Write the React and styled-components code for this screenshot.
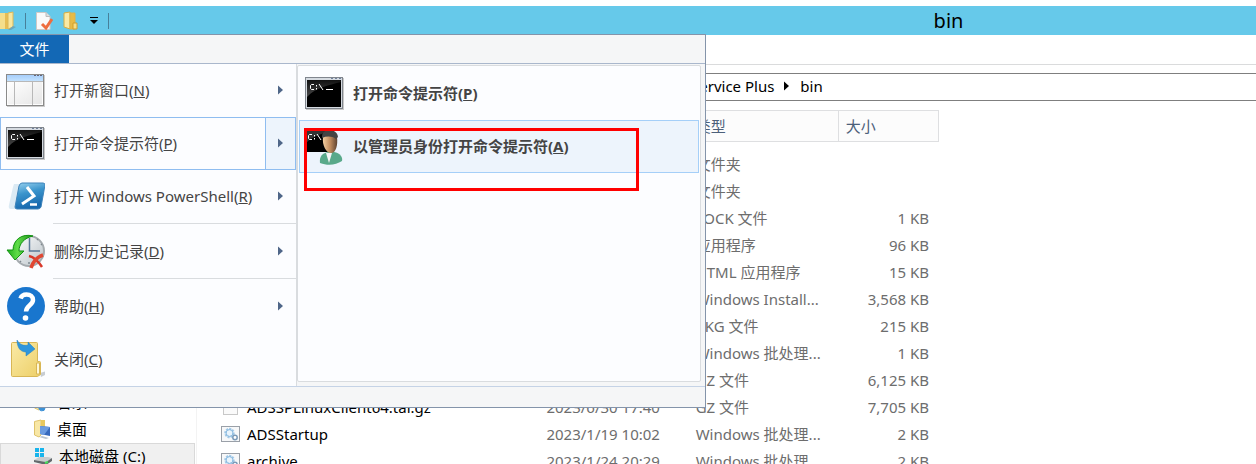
import React from 'react';
import styled, { createGlobalStyle } from 'styled-components';

const menuItems = [
  { icon: 'window', label: '打开新窗口', accessKey: 'N', arrow: true },
  { icon: 'cmd', label: '打开命令提示符', accessKey: 'P', arrow: true, active: true },
  { icon: 'powershell', label: '打开 Windows PowerShell', accessKey: 'R', arrow: true },
  { icon: 'history', label: '删除历史记录', accessKey: 'D', arrow: true, divided: true },
  { icon: 'help', label: '帮助', accessKey: 'H', arrow: true, divided: true },
  { icon: 'close', label: '关闭', accessKey: 'C' },
];

const subItems = [
  { icon: 'cmd', label: '打开命令提示符', accessKey: 'P' },
  { icon: 'admin', label: '以管理员身份打开命令提示符', accessKey: 'A', active: true },
];

const files = [
  { type: '文件夹' },
  { type: '文件夹' },
  { type: 'LOCK 文件', size: '1 KB' },
  { type: '应用程序', size: '96 KB' },
  { type: 'HTML 应用程序', size: '15 KB' },
  { type: 'Windows Install...', size: '3,568 KB' },
  { type: 'PKG 文件', size: '215 KB' },
  { type: 'Windows 批处理...', size: '1 KB' },
  { type: 'GZ 文件', size: '6,125 KB' },
  { icon: 'file', name: 'ADSSPLinuxClient64.tar.gz', date: '2023/6/30 17:40', type: 'GZ 文件', size: '7,705 KB' },
  { icon: 'batch', name: 'ADSStartup', date: '2023/1/19 10:02', type: 'Windows 批处理...', size: '2 KB' },
  { icon: 'batch', name: 'archive', date: '2023/1/24 20:29', type: 'Windows 批处理...', size: '2 KB' },
];

const places = [
  { icon: 'music', label: '音乐' },
  { icon: 'desktop', label: '桌面' },
  { icon: 'disk', label: '本地磁盘 (C:)', selected: true },
];

function WindowIcon() {
  return (
    <svg width="40" height="40" viewBox="0 0 40 40">
      <defs>
        <linearGradient id="winBar" x2="0" y2="1">
          <stop offset="0" stopColor="#a6cdfa" />
          <stop offset="1" stopColor="#c3e2ff" />
        </linearGradient>
        <linearGradient id="winPane" x2="1" y2="1">
          <stop offset="0" stopColor="#fff" />
          <stop offset="1" stopColor="#e6e6e6" />
        </linearGradient>
      </defs>
      <rect x="2" y="5" width="38" height="32" fill="#ccc" />
      <rect x="1.500" y="4.500" width="37" height="31" fill="#fdfdfd" stroke="#8a8a8a" />
      <rect x="2" y="5" width="36" height="6" fill="url(#winBar)" />
      <rect x="3" y="12" width="34" height="22" fill="url(#winPane)" />
      <path d="M9.500 12v23M27.500 12v23M2 11.500h36" stroke="#b8b8b8" />
      <path d="M29 5.500h2M32 5.500h2M35 5.500h2" stroke="#667" />
    </svg>
  );
}

function CmdIcon() {
  return (
    <svg width="40" height="40" viewBox="0 0 40 40">
      <defs>
        <linearGradient id="cmdGloss" x2="0" y2="1">
          <stop offset="0" stopColor="#111" />
          <stop offset="1" stopColor="#4a4a4a" />
        </linearGradient>
      </defs>
      <rect x="2" y="5" width="38" height="32" fill="#c9c9c9" />
      <rect x="1.500" y="4.500" width="37" height="31" fill="#d5dae0" stroke="#80868e" />
      <rect x="3" y="7" width="34" height="27" fill="#000" />
      <path d="M3 7h34v2C26 12 12 14 3 24z" fill="url(#cmdGloss)" />
      <path d="M27 5.500h2M31 5.500h2M35 5.500h2" stroke="#71809a" />
      <path
        d="M10 11.500H7.500L6.500 12.500v3l1 1H10M12.500 12v1.500M12.500 15v1.500M15 11l4 6M22 16.500h7"
        fill="none"
        stroke="#fff"
      />
    </svg>
  );
}

function PowerShellIcon() {
  return (
    <svg width="40" height="40" viewBox="0 0 40 40">
      <defs>
        <linearGradient id="ps" x2="0.300" y2="1">
          <stop offset="0" stopColor="#9bd3f0" />
          <stop offset="0.450" stopColor="#3a94cc" />
          <stop offset="1" stopColor="#1769ae" />
        </linearGradient>
      </defs>
      <path d="M9 8h6l-5 25H6q-3 0-2-4l4-18z" fill="#c5deed" opacity="0.600" />
      <path d="M17 7h21q2 0 2 2l-4 22q-1 2-3 2H12q-2 0-2-2l4-21q1-3 3-3z" fill="url(#ps)" stroke="#3d83ba" />
      <path d="M22 11l7 9-12 8" fill="none" stroke="#fff" strokeWidth="3" />
      <path d="M25 28.500h7" stroke="#fff" strokeWidth="2.500" />
    </svg>
  );
}

function HistoryIcon() {
  return (
    <svg width="40" height="40" viewBox="0 0 40 40">
      <defs>
        <linearGradient id="clock" x2="1" y2="1">
          <stop offset="0" stopColor="#fff" />
          <stop offset="1" stopColor="#b9c2c8" />
        </linearGradient>
        <linearGradient id="green" x2="1" y2="0">
          <stop offset="0" stopColor="#1fae1c" />
          <stop offset="0.400" stopColor="#5fdc48" />
          <stop offset="1" stopColor="#1b8f1a" />
        </linearGradient>
      </defs>
      <circle cx="24" cy="20" r="15" fill="url(#clock)" stroke="#a5abaf" strokeWidth="2" />
      <path d="M24.500 7v13H35" fill="none" stroke="#5a7897" strokeWidth="1.500" />
      <path d="M32 9l1-1M36 14l1-1M24 31v2M16 30l-1 1M13 25l-1 1" stroke="#7f8990" strokeWidth="1.500" />
      <path d="M28 5C17 2 8 9 8 19H2l8 10 9-9h-5c0-7 5-13 14-15z" fill="url(#green)" stroke="#139313" />
      <path d="M24 25c5 1 9 5 13 11" fill="none" stroke="#d8382a" strokeWidth="2.500" />
      <path d="M38 24c-6 2-10 6-12 13" fill="none" stroke="#e04732" strokeWidth="3.500" />
    </svg>
  );
}

function HelpIcon() {
  return (
    <svg width="40" height="40" viewBox="0 0 40 40">
      <circle cx="21" cy="20" r="19" fill="#1976ce" />
      <path d="M15.500 12.500c1-3 3-4 6-4 4 0 6.500 2 6.500 5.500 0 5-7 5.500-7 11.500" fill="none" stroke="#fff" strokeWidth="4.500" />
      <circle cx="20.500" cy="32" r="2.800" fill="#fff" />
    </svg>
  );
}

function CloseIcon() {
  return (
    <svg width="40" height="40" viewBox="0 0 40 40">
      <defs>
        <linearGradient id="folder" x2="1" y2="1">
          <stop offset="0" stopColor="#faeaa6" />
          <stop offset="1" stopColor="#edcf68" />
        </linearGradient>
      </defs>
      <path d="M35 34l7-2v3l-6 3z" fill="#c8cdd2" />
      <path d="M6.500 4.500q0-1 1-1h24q1 0 1 1v18h2q1 0 1 1v12l-3 2h-25q-1 0-1-1z" fill="url(#folder)" stroke="#d8b655" />
      <path d="M31.500 35V24h3v11z" fill="#fff8d8" stroke="#d8b655" />
      <path d="M12 1c3 5 7 6 11 5V3l7 7-9 7v-4c-6 0-9-5-9-12z" fill="#2e96dc" stroke="#2380c0" strokeWidth="0.500" />
    </svg>
  );
}

function AdminIcon() {
  return (
    <svg width="40" height="40" viewBox="0 0 40 40">
      <defs>
        <linearGradient id="face" x2="1" y2="0">
          <stop offset="0" stopColor="#f3cfa2" />
          <stop offset="0.500" stopColor="#c18c5e" />
          <stop offset="1" stopColor="#5d4230" />
        </linearGradient>
      </defs>
      <rect x="2" y="2" width="28" height="24" fill="#000" />
      <path d="M2 2h28v3C20 7 10 9 2 17z" fill="#333" />
      <path d="M8 8.500H5.500l-1 1v3l1 1H8M10.500 9v1.500M10.500 12v1.500M13 8l4 6" fill="none" stroke="#fff" />
      <path d="M16 37c-1-7 3-10 8-11h6c6 1 9 5 8 9-6 4-14 5-22 2z" fill="#59a98a" />
      <path d="M22 27l3 10 3-10z" fill="#f5f5f5" />
      <path d="M19 11c0-4 14-4 14 0 1 8-1 16-6 16s-9-8-8-16z" fill="url(#face)" />
      <path d="M18 10c1-8 15-8 16 1l-2 2c-4-3-9-3-14-1z" fill="#444" />
    </svg>
  );
}

function FolderIcon() {
  return (
    <svg width="18" height="20" viewBox="0 0 18 20">
      <path d="M2 2l6-1v17l-6-2z" fill="#f9e9a4" stroke="#d6ad43" />
      <path d="M8 2h5v16H8z" fill="#e7bb45" stroke="#ddb34a" />
      <path d="M11 12h4v6h-4z" fill="#f7dd83" stroke="#cf9d2c" />
    </svg>
  );
}

function OpenFolderIcon() {
  return (
    <svg width="16" height="20" viewBox="0 0 16 20">
      <path d="M0 2h5v16H0z" fill="#f4de8c" />
      <path d="M5 2h3v16H5z" fill="#e6bd55" />
      <path d="M8 2l5-1v15l-5 2z" fill="#f8e7a0" stroke="#dcb858" />
      <path d="M13 15l3 1-5 3H8z" fill="#6aa8bd" />
    </svg>
  );
}

function PropertiesIcon() {
  return (
    <svg width="18" height="20" viewBox="0 0 18 20">
      <path d="M1.500 1.500H11l4 4v13H1.500z" fill="#fafafa" stroke="#cfc9c6" />
      <path d="M11 1.500v4h4" fill="#ddd" stroke="#bbb" />
      <path d="M7 13l4 4 6-9" fill="none" stroke="#ee6d3f" strokeWidth="3" />
    </svg>
  );
}

function DesktopIcon() {
  return (
    <svg width="18" height="20" viewBox="0 0 18 20">
      <path d="M1.500 2.500L8 1v15l-2 2-4.500-2z" fill="#f8e7a5" stroke="#dfc36c" />
      <path d="M8 1h4v7H8z" fill="#e8c85f" />
      <path d="M7 7l10 1v9L7 15z" fill="#3569bd" />
      <path d="M7 7l10 1-6 8-4-1z" fill="#6a9be0" />
      <path d="M6 18l3-1 7 2-3 1z" fill="#b9c4cf" />
    </svg>
  );
}

function DiskIcon() {
  return (
    <svg width="20" height="20" viewBox="0 0 20 20">
      <path d="M2 2h4v4H2zM7 2h4v4H7zM2 7h4v4H2zM7 7h4v4H7z" fill="#18b4ec" />
      <path d="M1 14l5-3h9l4 1-6 4z" fill="#c8cdcf" />
      <path d="M1 14l12 2 6-4v3l-6 4-12-3z" fill="#64696c" />
      <path d="M12 17l3-1" stroke="#45e05a" strokeWidth="2" />
    </svg>
  );
}

function MusicIcon() {
  return (
    <svg width="18" height="20" viewBox="0 0 18 20">
      <path d="M1.500 2.500L8 1v15l-2 2-4.500-2z" fill="#f8e7a5" stroke="#dfc36c" />
      <path d="M10 3v10a3 3 0 1 0 2 3V7l3 2" fill="#3c91d6" stroke="#3c91d6" />
    </svg>
  );
}

function BatchIcon() {
  return (
    <svg width="20" height="18" viewBox="0 0 20 18">
      <rect x="0.500" y="1.500" width="18" height="15" fill="#f7f8f9" stroke="#9aa0a8" />
      <circle cx="8.500" cy="8" r="4" fill="#e9f4fc" stroke="#a3cae8" strokeWidth="2.500" strokeDasharray="2 1" />
      <circle cx="8.500" cy="8" r="3.500" fill="none" stroke="#8dbbe0" />
      <circle cx="14" cy="12.500" r="2.200" fill="#fff" stroke="#7c9bb9" strokeWidth="1.500" />
    </svg>
  );
}

function FileIcon() {
  return (
    <svg width="20" height="18" viewBox="0 0 20 18">
      <rect x="2.500" y="0.500" width="14" height="16" fill="#fafafa" stroke="#c8c8c8" />
    </svg>
  );
}

const icons = {
  window: WindowIcon,
  cmd: CmdIcon,
  powershell: PowerShellIcon,
  history: HistoryIcon,
  help: HelpIcon,
  close: CloseIcon,
  admin: AdminIcon,
  desktop: DesktopIcon,
  disk: DiskIcon,
  music: MusicIcon,
  batch: BatchIcon,
  file: FileIcon,
};

function Icon({ name }) {
  const Drawing = icons[name];
  return Drawing ? <Drawing /> : null;
}

function Arrow({ color }) {
  return (
    <svg width="6" height="10" viewBox="0 0 6 10">
      <path d="M0 0.500l5 4.500-5 4.500z" fill={color} />
    </svg>
  );
}

function MenuLabel({ item }) {
  return (
    <span>
      {item.label}(<u>{item.accessKey}</u>)
    </span>
  );
}

function FileMenu() {
  return (
    <Menu>
      <MenuTabs>
        <FileTab type="button">文件</FileTab>
      </MenuTabs>
      <MenuBody>
        <MenuList>
          {menuItems.map((item) => (
            <React.Fragment key={item.accessKey}>
              {item.divided && <Divider />}
              <MenuButton type="button" $active={item.active}>
                <MenuMain>
                  <Icon name={item.icon} />
                  <MenuLabel item={item} />
                </MenuMain>
                {item.arrow && (
                  <ArrowBox $active={item.active}>
                    <Arrow color="#4f6688" />
                  </ArrowBox>
                )}
              </MenuButton>
            </React.Fragment>
          ))}
        </MenuList>
        <SubMenu>
          {subItems.map((item) => (
            <SubButton key={item.accessKey} type="button" $active={item.active}>
              <Icon name={item.icon} />
              <MenuLabel item={item} />
            </SubButton>
          ))}
          <Highlight />
        </SubMenu>
      </MenuBody>
      <MenuFooter />
    </Menu>
  );
}

function FileTable() {
  return (
    <Table>
      <colgroup>
        <col width="342" />
        <col width="149" />
        <col width="150" />
        <col width="100" />
      </colgroup>
      <thead>
        <tr>
          <HeadCell>名称</HeadCell>
          <HeadCell>修改日期</HeadCell>
          <HeadCell>类型</HeadCell>
          <HeadCell>大小</HeadCell>
        </tr>
      </thead>
      <tbody>
        <Spacer />
        {files.map((file, i) => (
          <tr key={i}>
            <Cell $dark>
              <FileName>
                <Icon name={file.icon} />
                {file.name}
              </FileName>
            </Cell>
            <Cell>{file.date}</Cell>
            <Cell>{file.type}</Cell>
            <Cell $right>{file.size}</Cell>
          </tr>
        ))}
      </tbody>
    </Table>
  );
}

export default function App() {
  return (
    <Window>
      <GlobalStyle />
      <TitleBar>
        <QuickAccess>
          <OpenFolderIcon />
          <Separator />
          <PropertiesIcon />
          <FolderIcon />
          <svg width="10" height="10" viewBox="0 0 10 10">
            <path d="M1 1.500h8" stroke="#000" />
            <path d="M1 4h8L5 8z" fill="#000" />
          </svg>
          <Separator />
        </QuickAccess>
        <Title>bin</Title>
      </TitleBar>
      <RibbonTabs />
      <AddressBar>
        <span>Service Plus</span>
        <Arrow color="#000" />
        <span>bin</span>
      </AddressBar>
      <Content>
        <Sidebar>
          {places.map((place) => (
            <Place key={place.label} href="#" $selected={place.selected}>
              <Icon name={place.icon} />
              {place.label}
            </Place>
          ))}
        </Sidebar>
        <FileTable />
      </Content>
      <FileMenu />
    </Window>
  );
}

const GlobalStyle = createGlobalStyle`
  * {
    box-sizing: border-box;
  }
  body {
    margin: 0;
    background: #fff;
    color: #000;
    font-family: 'Noto Sans', 'Noto Sans CJK SC', sans-serif;
    font-size: 15px;
    line-height: 20px;
  }
  button {
    font: inherit;
    color: inherit;
    text-align: left;
    background: none;
    border: none;
    padding: 0;
  }
  svg {
    display: block;
    flex-shrink: 0;
  }
`;

const Window = styled.div`
  position: relative;
  display: flex;
  flex-direction: column;
  height: 100vh;
  padding-top: 6px;
  overflow: hidden;
`;

const TitleBar = styled.header`
  display: flex;
  align-items: center;
  flex-shrink: 0;
  height: 29px;
  background: #66c9ea;
`;

const QuickAccess = styled.div`
  display: flex;
  align-items: center;
  gap: 9px;
  width: 641px;
`;

const Separator = styled.span`
  width: 1px;
  height: 16px;
  background: #47809a;
`;

const Title = styled.h1`
  flex: 1;
  margin: 0;
  font-size: 20px;
  font-weight: 400;
  text-align: center;
`;

const RibbonTabs = styled.div`
  flex-shrink: 0;
  height: 30px;
  border-bottom: 1px solid #dadbdc;
`;

const AddressBar = styled.nav`
  display: flex;
  align-items: center;
  gap: 10px;
  flex-shrink: 0;
  height: 28px;
  margin-top: 8px;
  padding: 0 0 2px 691px;
  border: solid #7f7f7f;
  border-width: 1px 0;
`;

const Content = styled.main`
  display: flex;
  flex: 1;
  min-height: 0;
  padding-top: 9px;
`;

const Sidebar = styled.nav`
  width: 197px;
  flex-shrink: 0;
  padding-top: 279px;
  border-right: 1px solid #f3f3f3;
`;

const Place = styled.a`
  display: flex;
  align-items: center;
  gap: 6px;
  height: 27px;
  margin-right: 1px;
  padding: 0 0 2px 32px;
  color: #000;
  text-decoration: none;
  border: 1px solid ${(props) => (props.$selected ? '#d9d9d9' : 'transparent')};
  background: ${(props) => (props.$selected ? '#f0f0f0' : 'none')};
`;

const Table = styled.table`
  width: 742px;
  align-self: flex-start;
  table-layout: fixed;
  border-collapse: separate;
  border-spacing: 0;
`;

const HeadCell = styled.th`
  height: 32px;
  padding: 0 7px;
  color: #4c607a;
  font-weight: 400;
  text-align: left;
  background: #fcfcfc;
  border: solid #dedfe1;
  border-width: 1px 1px 1px 0;
`;

const Spacer = styled.tr`
  height: 9px;
`;

const Cell = styled.td`
  height: 27px;
  padding: 0 10px 2px 7px;
  white-space: nowrap;
  color: ${(props) => (props.$dark ? '#000' : '#6d6d6d')};
  text-align: ${(props) => (props.$right ? 'right' : 'left')};
`;

const FileName = styled.div`
  display: flex;
  align-items: center;
  gap: 6px;
  padding-left: 17px;
`;

const Menu = styled.div`
  position: absolute;
  top: 34px;
  left: 0;
  width: 706px;
  color: #444;
  background: #f5f6f7;
  border: solid #8494aa;
  border-width: 1px 1px 1px 0;
`;

const MenuTabs = styled.div`
  display: flex;
  height: 29px;
  border-bottom: 1px solid #a9b7cc;
`;

const FileTab = styled.button`
  width: 69px;
  height: 28px;
  color: #fff;
  text-align: center;
  background: #1368b5;
`;

const MenuBody = styled.div`
  display: flex;
`;

const MenuList = styled.div`
  width: 297px;
  background: #fcfdff;
  border-right: 1px solid #d9dcdf;
`;

const MenuButton = styled.button`
  display: flex;
  width: 100%;
  height: 53px;
  border: 1px solid ${(props) => (props.$active ? '#8fbdf0' : 'transparent')};
`;

const MenuMain = styled.span`
  display: flex;
  align-items: center;
  flex: 1;
  gap: 9px;
  height: 100%;
  padding: 0 0 2px 4px;
`;

const ArrowBox = styled.span`
  display: flex;
  align-items: center;
  justify-content: center;
  width: 30px;
  height: 100%;
  padding-bottom: 2px;
  border-left: 1px solid ${(props) => (props.$active ? '#8fbdf0' : 'transparent')};
  background: ${(props) => (props.$active ? '#edf4fc' : 'none')};
`;

const Divider = styled.div`
  height: 1px;
  margin: 0 0 1px 53px;
  background: #d9dcdf;
`;

const SubMenu = styled.div`
  position: relative;
  flex: 1;
  margin: 1px 4px 4px 0;
  padding: 1px;
  background: #fcfdff;
  border: 1px solid #d9dcdf;
  border-radius: 2px;
`;

const SubButton = styled.button`
  display: flex;
  align-items: center;
  gap: 9px;
  width: 100%;
  height: 53px;
  padding: 0 0 2px 4px;
  font-weight: 700;
  border: 1px solid ${(props) => (props.$active ? '#a5cff8' : 'transparent')};
  background: ${(props) => (props.$active ? '#edf4fc' : 'none')};
`;

const Highlight = styled.div`
  position: absolute;
  top: 62px;
  left: 6px;
  width: 335px;
  height: 63px;
  border: 3px solid #f00;
  pointer-events: none;
`;

const MenuFooter = styled.div`
  height: 21px;
  border-top: 1px solid #c5d3e6;
`;
